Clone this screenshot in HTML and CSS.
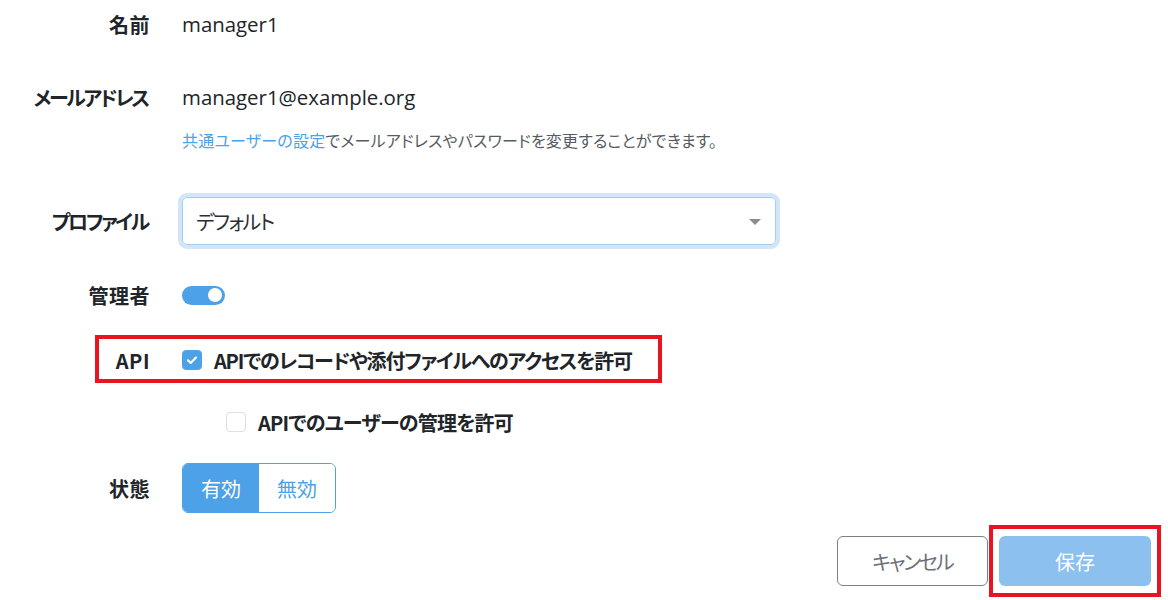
FILE: index.html
```html
<!DOCTYPE html>
<html lang="ja">
<head>
<meta charset="utf-8">
<title>ユーザー設定</title>
<link rel="stylesheet" href="styles.css">
</head>
<body>
<form class="form">
  <div class="row row-name">
    <div class="label">名前</div>
    <div class="value">manager1</div>
  </div>
  <div class="row row-email">
    <div class="label kana">メールアドレス</div>
    <div class="value">manager1@example.org</div>
  </div>
  <div class="help-row">
    <span class="link">共通ユーザーの設定</span>でメールアドレスやパスワードを変更することができます。
  </div>
  <div class="row row-profile">
    <div class="label kana">プロファイル</div>
    <div class="select">
      <span class="select-text">デフォルト</span>
      <span class="caret"></span>
    </div>
  </div>
  <div class="row row-admin">
    <div class="label">管理者</div>
    <div class="toggle"><span class="knob"></span></div>
  </div>
  <div class="row row-api">
    <div class="highlight"></div>
    <div class="label">API</div>
    <label class="check">
      <span class="box checked">
        <svg viewBox="0 0 20 20" width="20" height="20"><path d="M5.6 10.4 L8.6 13.2 L14.4 7.2" fill="none" stroke="#fff" stroke-width="2.4" stroke-linecap="round" stroke-linejoin="round"/></svg>
      </span>
      <span class="check-text">APIでのレコードや添付ファイルへのアクセスを許可</span>
    </label>
  </div>
  <div class="row row-api2">
    <div class="label"></div>
    <label class="check sub">
      <span class="box"></span>
      <span class="check-text loose">APIでのユーザーの管理を許可</span>
    </label>
  </div>
  <div class="row row-state">
    <div class="label">状態</div>
    <div class="segment">
      <span class="seg active">有効</span>
      <span class="seg">無効</span>
    </div>
  </div>
  <div class="actions">
    <span class="btn btn-cancel">キャンセル</span>
    <span class="save-mark"><span class="btn btn-save">保存</span></span>
  </div>
</form>
</body>
</html>
```

FILE: styles.css
```css
* { box-sizing: border-box; }
html, body {
  margin: 0;
  padding: 0;
  background: #fff;
}
body {
  font-family: "Open Sans", "Noto Sans CJK JP", sans-serif;
  font-size: 20px;
  color: #212529;
  width: 1168px;
  height: 600px;
  overflow: hidden;
}
.form {
  display: flex;
  flex-direction: column;
}
.row {
  position: relative;
  display: flex;
  align-items: center;
  height: 48px;
}
.label {
  width: 150px;
  flex: none;
  text-align: right;
  font-weight: 700;
  margin-right: 32px;
  font-family: "Noto Sans CJK JP", sans-serif;
  font-feature-settings: "palt";
  letter-spacing: 0.5px;
}
.label.kana {
  letter-spacing: -2.3px;
  padding-right: 2px;
}
.value {
  font-family: "Open Sans", "Noto Sans CJK JP", sans-serif;
  font-size: 20.4px;
}
.row-name { margin-top: 0; }
.row-email { margin-top: 25px; }
.help-row {
  margin-top: 7px;
  padding-left: 182px;
  height: 24px;
  line-height: 24px;
  font-size: 16px;
  color: #555b61;
  font-family: "Noto Sans CJK JP", sans-serif;
  font-feature-settings: "palt";
  letter-spacing: 0.2px;
}
.link { color: #4da1e6; }
.row-profile { margin-top: 45px; }
.select {
  width: 594px;
  height: 48px;
  border: 1px solid #a5cdf2;
  border-radius: 5px;
  box-shadow: 0 0 0 4px #d2e6f9;
  display: flex;
  align-items: center;
  justify-content: space-between;
  padding: 0 14px 0 13px;
  font-family: "Noto Sans CJK JP", sans-serif;
  font-size: 20px;
  color: #2b2f33;
}
.select-text {
  font-feature-settings: "palt";
  letter-spacing: -1.5px;
}
.caret {
  width: 0;
  height: 0;
  border-left: 6px solid transparent;
  border-right: 6px solid transparent;
  border-top: 6px solid #8c8c8c;
  margin-top: 2px;
}
.row-admin { margin-top: 26px; }
.toggle {
  width: 43px;
  height: 19px;
  border-radius: 10px;
  background: #4da1e6;
  position: relative;
}
.knob {
  position: absolute;
  right: 3px;
  top: 2.5px;
  width: 14px;
  height: 14px;
  border-radius: 50%;
  background: #fff;
}
.row-api { margin-top: 17px; }
.highlight {
  position: absolute;
  left: 95px;
  top: -1px;
  width: 567px;
  height: 48px;
  border: 4px solid #e8141f;
  pointer-events: none;
}
.check {
  display: flex;
  align-items: center;
  gap: 12px;
}
.check.sub { margin-left: 44px; }
.box {
  width: 20px;
  height: 20px;
  border-radius: 4px;
  border: 1px solid #dcdfe3;
  background: #fff;
  display: flex;
  align-items: center;
  justify-content: center;
}
.box.checked {
  background: #4da1e6;
  border-color: #4da1e6;
}
.box svg { display: block; }
.check-text {
  font-family: "Noto Sans CJK JP", sans-serif;
  font-weight: 700;
  font-size: 20px;
  font-feature-settings: "palt";
  letter-spacing: -1.2px;
}
.check-text.loose { letter-spacing: -0.8px; }
.row-api2 { margin-top: 14px; }
.row-state { margin-top: 17px; height: 50px; }
.segment {
  display: flex;
  height: 50px;
  border: 1px solid #4da1e6;
  border-radius: 6px;
  overflow: hidden;
}
.seg {
  width: 76px;
  display: flex;
  align-items: center;
  justify-content: center;
  font-family: "Noto Sans CJK JP", sans-serif;
  font-size: 20px;
  color: #4da1e6;
  background: #fff;
}
.seg.active {
  background: #4da1e6;
  color: #fff;
}
.actions {
  margin-top: 12px;
  display: flex;
  justify-content: flex-end;
  align-items: center;
  padding-right: 7px;
}
.btn {
  width: 151px;
  height: 50px;
  border-radius: 6px;
  display: flex;
  align-items: center;
  justify-content: center;
  font-family: "Noto Sans CJK JP", sans-serif;
  font-size: 20px;
}
.btn-cancel {
  border: 1px solid #7a8088;
  color: #6a7077;
  margin-right: 1px;
  font-feature-settings: "palt";
  letter-spacing: -2px;
}
.save-mark {
  border: 4px solid #e8141f;
  padding: 7px 6px;
  display: block;
}
.btn-save {
  width: 152px;
  background: #8cc1ef;
  color: #fff;
}
```
